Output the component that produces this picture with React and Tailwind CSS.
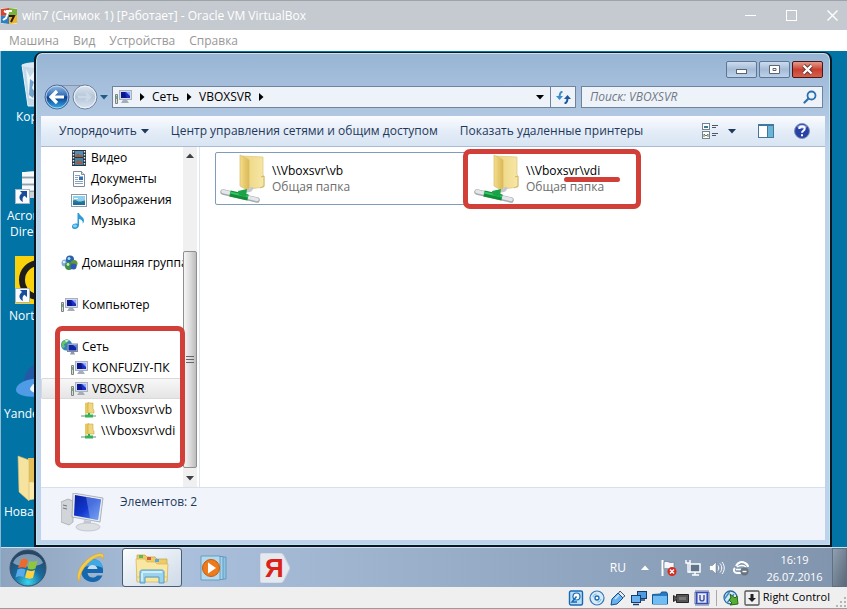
// src/App.jsx
const treeItems = [
  { label: "Видео", level: 1, icon: VideoIcon },
  { label: "Документы", level: 1, icon: DocumentIcon },
  { label: "Изображения", level: 1, icon: ImageIcon },
  { label: "Музыка", level: 1, icon: MusicIcon },
  { label: "Домашняя группа", level: 0, icon: HomeGroupIcon, spaced: true },
  { label: "Компьютер", level: 0, icon: ComputerIcon, spaced: true },
  { label: "Сеть", level: 0, icon: NetworkIcon, spaced: true },
  { label: "KONFUZIY-ПК", level: 1, icon: ComputerIcon },
  { label: "VBOXSVR", level: 1, icon: ComputerIcon, active: true },
  { label: "\\\\Vboxsvr\\vb", level: 2, icon: ShareIcon },
  { label: "\\\\Vboxsvr\\vdi", level: 2, icon: ShareIcon },
];

const indents = ["pl-5", "pl-[30px]", "pl-10"];

function VideoIcon() {
  return (
    <svg width="16" height="16" viewBox="0 0 16 16">
      <rect x="1" y="0" width="14" height="16" fill="#2b3440" />
      <rect x="4" y="1" width="8" height="6" fill="#4f8fb8" />
      <rect x="4" y="8" width="8" height="7" fill="#3f86ad" />
      <path d="M4 7l3-4 2 3 1-2 2 3zM5 14l2-5 2 4 2-3v4z" fill="#a65a3a" />
      <path d="M2.500 1v15M13.500 1v15" stroke="#e8edf2" strokeWidth="1.400" strokeDasharray="1.500 1.500" />
    </svg>
  );
}

function DocumentIcon() {
  return (
    <svg width="16" height="16" viewBox="0 0 16 16">
      <path d="M2.500.500h8l3 3v12h-11z" fill="#fff" stroke="#7d8c9b" />
      <path d="M10.500.500v3h3" fill="#dbe5ee" stroke="#7d8c9b" />
      <path d="M4 4.500h5M4 6.500h3M4 8.500h3M4 10.500h8M4 12.500h8" stroke="#8ba2bb" />
      <rect x="8" y="5.500" width="4" height="3.500" fill="#2f6fb5" />
    </svg>
  );
}

function ImageIcon() {
  return (
    <svg width="16" height="16" viewBox="0 0 16 16">
      <rect x=".5" y="2.500" width="15" height="12" fill="#fff" stroke="#8b98a5" />
      <rect x="2" y="4" width="12" height="9" fill="#8fd0ee" />
      <path d="M2 8.500c3-1.500 4 .5 6 1s4-1 6-1V13H2z" fill="#2c7f8c" />
      <path d="M2 11c4-1 8 0 12-.5V13H2z" fill="#1c6fa0" />
      <path d="M3 6.500h4" stroke="#fff" />
    </svg>
  );
}

function MusicIcon() {
  return (
    <svg width="16" height="16" viewBox="0 0 16 16">
      <path d="M6.500 0H8c.5 3 5.500 4 5 8-.2 1.300-1 2.300-1.500 2.500C12.500 8 10 6.500 8 6v6c0 2.500-2 4-4.300 4S1 14.700 1 13.300c0-2 2.700-3.500 5.500-2.600z" fill="#2c9bd8" />
      <ellipse cx="4" cy="13" rx="2" ry="1.400" fill="#8ad4f5" />
    </svg>
  );
}

function HomeGroupIcon() {
  return (
    <svg width="17" height="16" viewBox="0 0 17 16">
      <circle cx="4" cy="8" r="3.500" fill="#7fa9d8" />
      <circle cx="9" cy="4.500" r="4" fill="#2b61a8" />
      <circle cx="13" cy="8.500" r="3.500" fill="#5d9a3f" />
      <circle cx="8" cy="11" r="4" fill="#3f8d4b" />
      <circle cx="12.500" cy="11.500" r="3" fill="#3158b5" />
      <circle cx="8" cy="3.500" r="1.500" fill="#a6dff5" />
      <circle cx="7" cy="9.500" r="1.400" fill="#c9ecb2" />
      <circle cx="3" cy="7" r="1.300" fill="#d9ecfb" />
    </svg>
  );
}

function ComputerIcon() {
  return (
    <svg width="17" height="16" viewBox="0 0 17 16">
      <path d="M.5 5.500h2v9h-2z" fill="#d5dad5" stroke="#7c8580" />
      <path d="M1.500 7v3" stroke="#6cb66c" />
      <rect x="4.500" y="1.500" width="12" height="9" fill="#d3d9e6" stroke="#a9b0c4" />
      <rect x="6" y="3" width="9" height="6" fill="#1c2fc0" />
      <path d="M6 3h4l1.500 6H6z" fill="#0a1690" />
      <path d="M11 3h4v4z" fill="#8aa8ff" />
      <path d="M8 11h4l2 3H6z" fill="#a7adb8" />
    </svg>
  );
}

function NetworkIcon() {
  return (
    <svg width="17" height="16" viewBox="0 0 17 16">
      <circle cx="5.500" cy="6" r="5.500" fill="#2d87b8" />
      <path d="M1.500 3c2-2.500 4-2.500 6-2.500L6 4 3 5l1 3-2 1C0 7 .5 5 1.500 3z" fill="#6cc26b" />
      <path d="M4 1.500c2-.8 3-.5 4 .5L5 3z" fill="#d8f3e2" />
      <rect x="6.500" y="5" width="10" height="7.500" fill="#c4cdde" stroke="#7b88a0" />
      <rect x="7.500" y="6" width="8" height="5.500" fill="#0d25a8" />
      <path d="M12 6h3.500v3z" fill="#5b83ee" />
      <path d="M10 13h3l1 2.500H9z" fill="#8f99a9" />
    </svg>
  );
}

function ShareIcon() {
  return (
    <svg width="16" height="16" viewBox="0 0 16 16">
      <path d="M4 1l4-1v11l-4 1z" fill="#e8c860" />
      <path d="M7 1h5v6l1 1v3H7z" fill="#f0d67c" stroke="#c9a846" strokeWidth=".6" />
      <path d="M8 11v3" stroke="#35a852" strokeWidth="2" />
      <path d="M0 14h15" stroke="#b9c4c0" strokeWidth="2" />
      <path d="M4 14h8" stroke="#35b455" strokeWidth="3" />
    </svg>
  );
}

function SharedFolderIcon() {
  return (
    <svg width="48" height="50" viewBox="0 0 48 50" className="shrink-0">
      <defs>
        <linearGradient id="folderFront" x1="0" x2="1">
          <stop offset="0" stopColor="#f3dd8c" />
          <stop offset="1" stopColor="#dcb955" />
        </linearGradient>
        <linearGradient id="folderBack" x1="0" x2="1">
          <stop offset="0" stopColor="#ecd27c" />
          <stop offset="1" stopColor="#f7e7a6" />
        </linearGradient>
      </defs>
      <path d="M22 3l21 1v18l1 2v10L30 36z" fill="url(#folderBack)" stroke="#dcc57d" strokeWidth=".7" />
      <path d="M20 2l9 5v31l-9-5z" fill="url(#folderFront)" stroke="#d8bd68" strokeWidth=".7" />
      <path d="M41 24l3-1v10l-4 2" fill="#f5e6a8" stroke="#c9a94c" strokeWidth=".8" />
      <path d="M32 34c0 3-2 4-6 4" stroke="#c3c9cd" strokeWidth="3" fill="none" />
      <path d="M3 39l34 8" stroke="#a3a9ad" strokeWidth="5.500" strokeLinecap="round" />
      <path d="M3 38.500l34 8" stroke="#e3e7e9" strokeWidth="3.500" strokeLinecap="round" />
      <path d="M10 40.500l18 4" stroke="#108c3a" strokeWidth="6" />
      <path d="M10 39.500l18 4" stroke="#34c462" strokeWidth="2" />
      <path d="M18 38l9-2-1 8-7-2z" fill="#19a248" />
    </svg>
  );
}

function BigComputerIcon() {
  return (
    <svg width="44" height="40" viewBox="0 0 44 40">
      <defs>
        <linearGradient id="screen" x1="0" x2="1" y2="1">
          <stop offset="0" stopColor="#0b1f9c" />
          <stop offset=".5" stopColor="#1238cf" />
          <stop offset="1" stopColor="#5f92f0" />
        </linearGradient>
      </defs>
      <path d="M0 9l7-3 5 2v21l-4 3-8-3z" fill="#d2d5d8" stroke="#9da2a8" strokeWidth=".7" />
      <path d="M2 12l4 1M2 15l4 1" stroke="#70767d" />
      <path d="M12 0l30 5-3 24-28-5z" fill="#e7ebef" stroke="#9ba3ac" strokeWidth=".8" />
      <path d="M14 2l26 4.500-3 20.500-24-4.500z" fill="url(#screen)" />
      <path d="M25 4l15 2.500-3 20.500-8-1.500z" fill="#9dc2fb" opacity=".4" />
      <path d="M23 27l7 1v5h-8z" fill="#c5cacf" />
      <ellipse cx="27" cy="34" rx="12" ry="4" fill="#dde0e3" stroke="#b4b9be" strokeWidth=".7" />
    </svg>
  );
}

function VBoxIcon() {
  return (
    <svg width="16" height="16" viewBox="0 0 16 16">
      <rect width="16" height="16" rx="1" fill="#e9efe9" />
      <path d="M0 1l8-1v7L0 8z" fill="#d6432d" />
      <path d="M8 0l8 1v6L8 7z" fill="#7fb23a" />
      <path d="M0 8l8-1v9l-8-1z" fill="#2f7fc4" />
      <path d="M8 7h8v8l-8 1z" fill="#f0b52e" />
      <path d="M3 3l4 2-2 5-3 2M5 3h6" stroke="#fff" strokeWidth="2" fill="none" />
      <path d="M8 8h5l-3 6" stroke="#2a1b12" strokeWidth="2" fill="none" />
    </svg>
  );
}

function NavButtons() {
  return (
    <svg width="54" height="26" viewBox="0 0 54 26">
      <defs>
        <linearGradient id="backBlue" x2="0" y2="1">
          <stop offset="0" stopColor="#9cc0e4" />
          <stop offset=".45" stopColor="#2f6bb5" />
          <stop offset=".5" stopColor="#0c3b8a" />
          <stop offset="1" stopColor="#35b4ee" />
        </linearGradient>
        <linearGradient id="fwdGrey" x2="0" y2="1">
          <stop offset="0" stopColor="#dce6f1" />
          <stop offset=".5" stopColor="#b5c5d8" />
          <stop offset="1" stopColor="#dbe6f2" />
        </linearGradient>
      </defs>
      <path d="M13 1h28c-6 2-9 6-14 6s-8-4-14-6z" fill="#a9bdd6" />
      <path d="M13 1.500h28" stroke="#8496b0" />
      <circle cx="13" cy="13" r="12" fill="url(#backBlue)" stroke="#4c6690" />
      <circle cx="13" cy="13" r="11" fill="none" stroke="#c8def5" strokeWidth=".8" />
      <path d="M20 13H8M13 7l-6 6 6 6" stroke="#fff" strokeWidth="3.200" fill="none" />
      <circle cx="41" cy="13" r="12" fill="url(#fwdGrey)" stroke="#71829c" />
      <circle cx="41" cy="13" r="10.800" fill="none" stroke="#eef4fa" />
      <path d="M34 13h12M42 9l4 4-4 4" stroke="#cbd8e6" strokeWidth="2.500" fill="none" />
    </svg>
  );
}

function Triangle({ dir = "down" }) {
  return (
    <svg width="8" height="8" viewBox="0 0 8 8">
      {dir === "down" && <path d="M0 2h8L4 6.500z" fill="currentColor" />}
      {dir === "right" && <path d="M2 0l4.500 4L2 8z" fill="currentColor" />}
      {dir === "up" && <path d="M0 6h8L4 1.500z" fill="currentColor" />}
    </svg>
  );
}

function DesktopIcons() {
  return (
    <ul className="w-[60px] text-white text-[12px] leading-4">
      <li className="pt-[10px] h-[117px]">
        <svg width="34" height="48" viewBox="0 0 34 48" className="ml-5">
          <path d="M1 4h32l-5 41H7z" fill="#c3d8e8" stroke="#e9f3fa" />
          <path d="M5 8l4 8 5-7 5 9 6-8v25l-8 5-9-3z" fill="#edf4fa" />
          <path d="M9 18l4 3-2 6 3 4-2 6-4-3zM20 20l5 5-4 7-2-5z" fill="#73a3cb" />
          <ellipse cx="17" cy="4" rx="16" ry="3" fill="#dbe8f1" />
        </svg>
        <span className="block pl-[15px]">Корзина</span>
      </li>
      <li className="h-[84px]">
        <svg width="36" height="38" viewBox="0 0 36 38" className="ml-[14px] mb-[2px]">
          <path d="M7 6c0-4 26-4 26 0v24H7z" fill="#c9d1d9" />
          <path d="M7 6h26M7 13h26M7 20h26" stroke="#f5f7f9" strokeWidth="4" />
          <path d="M7 9.500h26M7 16.500h26M7 23.500h26" stroke="#8fa0ae" />
          <ShortcutArrow />
        </svg>
        <span className="block pl-[6px]">Acronis</span>
        <span className="block pl-[9px]">Director</span>
      </li>
      <li className="pt-1 h-[110px]">
        <svg width="48" height="48" viewBox="0 0 48 48" className="ml-[14px] mb-1">
          <rect width="48" height="48" fill="#fad20c" />
          <circle cx="24" cy="24" r="17" fill="none" stroke="#1e1e1b" strokeWidth="6" />
          <g transform="translate(0 11)"><ShortcutArrow /></g>
        </svg>
        <span className="block pl-2">Norton</span>
      </li>
      <li className="h-[92px]">
        <svg width="46" height="40" viewBox="0 0 46 40" className="ml-[14px] mb-1">
          <path d="M9 20C10 6 20-2 36 2l4 22H12z" fill="#2459a8" />
          <path d="M1 28c0-8 14-12 28-12s20 10 12 15-40 6-40-3z" fill="#4f9be6" />
          <path d="M15 27c1-5 8-8 18-8v12c-8 2-17 0-18-4z" fill="#f2f7fc" />
        </svg>
        <span className="block pl-[3px]">Yandex</span>
      </li>
      <li>
        <svg width="44" height="48" viewBox="0 0 44 48" className="ml-[15px] mb-[2px]">
          <path d="M12 4h30v38l-30 4z" fill="#e3be59" />
          <path d="M12 28l28 2v12l-28 4z" fill="#f8e9aa" />
          <path d="M2 2l11 4v41L3 38z" fill="#f6e3a0" stroke="#d9bb66" strokeWidth=".6" />
        </svg>
        <span className="block pl-[3px]">Новая</span>
      </li>
    </ul>
  );
}

function ShortcutArrow() {
  return (
    <g>
      <rect x=".5" y="21.500" width="14" height="14" fill="#f8fafc" stroke="#a9b5c2" />
      <path d="M5 23h7v7l-2.500-2.200C7.500 29 7 31 8 34c-4-2-5-6-1-9z" fill="#174d9b" />
    </g>
  );
}

function WindowButton({ label, danger, children }) {
  return (
    <button
      aria-label={label}
      className={
        danger
          ? "w-[31px] h-[17px] flex items-center justify-center rounded-[2px] border border-[#4a1717] bg-linear-to-b from-[#e29a8d] via-[#c9402f] to-[#d4604e]"
          : "w-[31px] h-[17px] flex items-center justify-center rounded-[2px] border border-[#5e7594] bg-linear-to-b from-[#ccdcee] via-[#a5bbd6] to-[#bdd2ea]"
      }
    >
      <svg width="13" height="11" viewBox="0 0 13 11">{children}</svg>
    </button>
  );
}

function AddressBar() {
  return (
    <div className="flex items-center h-[26px] pl-[3px] pr-[2px] mt-[6px]">
      <button aria-label="Назад и вперёд"><NavButtons /></button>
      <button aria-label="Последние страницы" className="pl-[2px] pr-1 text-[#1f5c8c]"><Triangle /></button>
      <div className="flex-1 flex items-center h-[22px] border border-[#71839c] bg-[#eef3fa] text-black">
        <div className="flex-1 flex items-center gap-[6px] pl-[2px] text-[12px]">
          <ComputerIcon />
          <Triangle dir="right" />
          <a href="#net">Сеть</a>
          <Triangle dir="right" />
          <a href="#vboxsvr">VBOXSVR</a>
          <Triangle dir="right" />
        </div>
        <button aria-label="Журнал" className="px-[6px]"><Triangle /></button>
        <button aria-label="Обновить" className="w-[25px] h-full border-l border-[#71839c] flex items-center justify-center">
          <svg width="15" height="13" viewBox="0 0 15 13">
            <path d="M6.500.5C4 1 3.500 3 3.500 7" stroke="#3b8fc9" strokeWidth="2" fill="none" />
            <path d="M0 5h7L3.500 9z" fill="#3b8fc9" />
            <path d="M8.500 12.500c2.500-.5 3-2.500 3-6" stroke="#1d579d" strokeWidth="2" fill="none" />
            <path d="M8 8h7l-3.500-4z" fill="#1d579d" />
          </svg>
        </button>
      </div>
      <label className="flex items-center w-[242px] h-[22px] ml-[5px] border border-[#71839c] bg-[#eef3fa] pl-2 pr-[5px]">
        <input
          aria-label="Поиск"
          placeholder="Поиск: VBOXSVR"
          className="flex-1 min-w-0 bg-transparent italic text-[12px] outline-none placeholder:text-[#6f7884]"
        />
        <svg width="14" height="14" viewBox="0 0 14 14">
          <path d="M1.500 12.500L6 8" stroke="#2d6fae" strokeWidth="2.200" strokeLinecap="round" />
          <circle cx="8.500" cy="5.500" r="4" fill="#e8f4fd" stroke="#2d6fae" strokeWidth="1.800" />
        </svg>
      </label>
    </div>
  );
}

function Toolbar() {
  return (
    <div className="flex items-center h-[31px] mt-[6px] pl-[18px] pr-[15px] text-[12px] text-[#1e395b] border-b border-[#a9bcd3] bg-linear-to-b from-[#fafcfe] via-[#e4edf8] to-[#d9e5f3]">
      <button className="flex items-center gap-1">
        Упорядочить <Triangle />
      </button>
      <button className="ml-[22px]">Центр управления сетями и общим доступом</button>
      <button className="ml-[22px]">Показать удаленные принтеры</button>
      <div className="ml-auto flex items-center">
        <button aria-label="Вид" className="flex items-center gap-[9px]">
          <svg width="17" height="16" viewBox="0 0 17 16">
            <rect x=".5" y=".5" width="7" height="6" fill="#fff" stroke="#788391" />
            <rect x="2" y="3" width="4" height="2" fill="#3e7a90" />
            <rect x=".5" y="8.500" width="7" height="7" fill="#fff" stroke="#788391" />
            <path d="M2 14v-3l2 2 2-2v3" stroke="#5f7850" fill="none" />
            <path d="M10 2.500h6M10 4.500h4M10 10.500h6M10 12.500h4" stroke="#4d5866" />
          </svg>
          <Triangle />
        </button>
        <button aria-label="Область просмотра" className="ml-[22px]">
          <svg width="16" height="14" viewBox="0 0 16 14">
            <rect x=".5" y=".5" width="15" height="13" fill="#fff" stroke="#45769e" />
            <path d="M0 1.500h16" stroke="#45769e" />
            <rect x="10" y="2" width="5" height="11" fill="#69b5d5" />
            <path d="M9.500 2v11" stroke="#45769e" />
          </svg>
        </button>
        <button aria-label="Справка" className="ml-5">
          <svg width="16" height="16" viewBox="0 0 16 16">
            <circle cx="8" cy="8" r="7.500" fill="#2942a5" stroke="#8290b5" />
            <path d="M3 4c2-3 8-3 10 0-3 2-7 2-10 0z" fill="#91a7e0" />
            <path d="M5.300 6c0-3.300 5.400-3.300 5.400-.2 0 2-2.700 2-2.700 4M8 11.300v2" stroke="#fff" strokeWidth="2" fill="none" />
          </svg>
        </button>
      </div>
    </div>
  );
}

function Sidebar() {
  return (
    <nav className="relative flex w-[159px] shrink-0 border-r border-[#dde6f0]">
      <ul className="flex-1 min-w-0 overflow-hidden text-[12px] text-black">
        {treeItems.map((item) => (
          <li key={item.label} className={item.spaced ? "mt-[21px]" : ""}>
            <a
              href="#folder"
              className={`flex items-center gap-1 h-[21px] whitespace-nowrap [&>svg]:shrink-0 ${indents[item.level]} ${
                item.active ? "rounded-[2px] bg-linear-to-b from-[#f8f8f8] to-[#e4e4e4] outline -outline-offset-1 outline-[#d9d9d9]" : ""
              }`}
            >
              <item.icon />
              {item.label}
            </a>
          </li>
        ))}
      </ul>
      <div className="w-[14px] mr-[2px] flex flex-col items-center bg-[#f0f0f0] text-[#3d4045]">
        <button aria-label="Вверх" className="h-[18px]"><Triangle dir="up" /></button>
        <div className="mt-[86px] flex-1 w-full flex flex-col items-center justify-center gap-[2px] rounded-[2px] border border-[#8f8f8f] bg-linear-to-r from-[#f5f5f5] via-[#dcdcdc] to-[#bcbcbc]">
          <i className="w-2 h-px bg-[#666]" />
          <i className="w-2 h-px bg-[#666]" />
          <i className="w-2 h-px bg-[#666]" />
        </div>
        <button aria-label="Вниз" className="h-[19px]"><Triangle /></button>
      </div>
      <div className="absolute left-[14px] top-[179px] w-[130px] h-[142px] border-[5px] border-[#d23f38] rounded-[7px]" />
    </nav>
  );
}

function FolderTile({ name, focused, marked }) {
  return (
    <button
      className={`relative flex w-[253px] h-[53px] pl-1 border rounded-[2px] text-left ${
        focused ? "border-[#7f9db9]" : "border-transparent"
      }`}
    >
      <SharedFolderIcon />
      <span className="pl-1 pt-[10px] text-[12px] leading-4">
        <span className="block text-black">{name}</span>
        <span className="block text-[#6d6d6d]">Общая папка</span>
      </span>
      {marked && (
        <>
          <span className="absolute -left-[7px] -top-[4px] w-[178px] h-[60px] border-[5px] border-[#d23f38] rounded-[7px]" />
          <span className="absolute left-[94px] top-[24px] w-[56px] h-[5px] bg-[#d23f38] rounded-full" />
        </>
      )}
    </button>
  );
}

function ExplorerWindow() {
  return (
    <section className="absolute left-[33px] right-[15px] top-px bottom-0 flex flex-col border-2 border-[#10161f] border-t rounded-t-lg px-[5px] pb-[5px] bg-linear-to-b from-[#98b5d5] via-[#bfd2e9] via-20% to-[#bdd3eb] shadow-[inset_0_0_0_1px_#b9e6f5]">
      <div className="flex justify-end gap-[2px] pt-2 pr-[2px]">
        <WindowButton label="Свернуть">
          <rect x="1.500" y="5.500" width="10" height="4" fill="#fff" stroke="#5b6470" />
        </WindowButton>
        <WindowButton label="Развернуть">
          <path d="M1.500 1.500h10v8h-10zM5 4.500h3v2H5z" fill="#fff" stroke="#5b6470" />
        </WindowButton>
        <WindowButton label="Закрыть" danger>
          <path d="M2.500 1.500l8 8M10.500 1.500l-8 8" stroke="#5d3633" strokeWidth="4" />
          <path d="M2.500 1.500l8 8M10.500 1.500l-8 8" stroke="#fff" strokeWidth="2.400" />
        </WindowButton>
      </div>
      <AddressBar />
      <Toolbar />
      <div className="flex-1 min-h-0 flex bg-white">
        <Sidebar />
        <div className="flex-1 flex items-start gap-px pl-[15px] pt-[5px]">
          <FolderTile name={"\\\\Vboxsvr\\vb"} focused />
          <FolderTile name={"\\\\Vboxsvr\\vdi"} marked />
        </div>
      </div>
      <footer className="flex h-[53px] pl-5 pt-[5px] gap-[15px] border-t border-[#d5e1ef] bg-[#f1f5fb] text-[12px] text-[#1e395b]">
        <BigComputerIcon />
        <span>Элементов: 2</span>
      </footer>
    </section>
  );
}

function Taskbar() {
  return (
    <div className="flex items-center h-10 border-t border-[#d0e0f0] bg-linear-to-r from-[#8ea3bd] via-[#aac0dc] via-20% to-[#8094ad] text-white">
      <button aria-label="Пуск" className="pl-2">
        <svg width="38" height="38" viewBox="0 0 38 38">
          <defs>
            <radialGradient id="orb" cx=".5" cy=".9" r=".8">
              <stop offset="0" stopColor="#38d5ef" />
              <stop offset=".5" stopColor="#176a9d" />
              <stop offset="1" stopColor="#294565" />
            </radialGradient>
          </defs>
          <circle cx="19" cy="19" r="18" fill="url(#orb)" stroke="#36536e" />
          <path d="M4 14C8 2 30 2 34 14c-8 5-22 5-30 0z" fill="#b9cde0" opacity=".6" />
          <path d="M12 11c3-2 5-1 7 0l-2 8c-3-1-5-1-8 0z" fill="#ef6a2a" />
          <path d="M20.500 12c3 1 5 1 8-.5l-2 8c-3 1.500-5 1-8 0z" fill="#8fc63d" />
          <path d="M8.500 20.500c3-1.500 5-1 8 0l-2 7.500c-3-1-5-1-8 .5z" fill="#58aae8" />
          <path d="M18 21c3 1 5 1.500 8 0l-2 8c-3 1-5 1-8-.5z" fill="#fdd142" />
        </svg>
      </button>
      <button aria-label="Internet Explorer" className="ml-7">
        <svg width="32" height="32" viewBox="0 0 32 32">
          <path d="M28 21H12.500c.5 5 7 6 9.500 2.500h5.500C25 29 21 30 17.500 30 11 30 6 25 6 18.500S11 7 17.500 7C24 7 29 12 28 21z" fill="#1668ae" />
          <path d="M7 16C8 10 12 7 17.500 7S27 10 28 16c-6-3-15-3-21 0z" fill="#3fa9e6" />
          <path d="M12.500 17c1-5.500 9-5.500 10 0z" fill="#c8dcf0" />
          <path d="M5 30C-2 24 7 7 22 2c5-1.500 8 0 6 5-1-3-3-3-6-2C12 9 3 22 5 30z" fill="#f4cb4d" stroke="#d6a42b" strokeWidth=".6" />
        </svg>
      </button>
      <button aria-label="Проводник" className="ml-[15px] w-[60px] h-[39px] flex items-center justify-center rounded-[3px] border border-[#4a5d74] bg-linear-to-br from-[#fafcfd] to-[#cedae8]">
        <svg width="34" height="32" viewBox="0 0 34 32">
          <path d="M2 3h8l2 2h8l2 2h10v22H2z" fill="#edcc68" stroke="#c5a146" strokeWidth=".7" />
          <path d="M4 3h4v3H4z" fill="#63b84f" />
          <path d="M12 5h4v3h-4z" fill="#d75b3b" />
          <path d="M20 7h4v3h-4z" fill="#5aa5dc" />
          <path d="M1 7h9l2 3h8l2 2h11l-1 18H2z" fill="#f9e6a0" stroke="#d2b35c" strokeWidth=".7" />
          <path d="M2 25h30" stroke="#e4c772" />
          <path d="M5 31V20c0-1 1-2 2-2h20c1 0 2 1 2 2v11h-5v-6H10v6z" fill="#9bd2ed" stroke="#4f9fca" />
          <path d="M7 20h20M7 21v8" stroke="#e1f5fc" strokeWidth="1.500" />
        </svg>
      </button>
      <button aria-label="Windows Media Player" className="ml-[18px]">
        <svg width="30" height="28" viewBox="0 0 30 28">
          <path d="M8 3h18v22H8z" fill="#8fc3e2" stroke="#5793b8" strokeWidth=".8" />
          <path d="M5 2.500h18v23H5z" fill="#a5d1ea" stroke="#5793b8" strokeWidth=".8" />
          <path d="M1 2h19v24H1z" fill="#b4daef" stroke="#5793b8" strokeWidth=".8" />
          <circle cx="11" cy="14" r="8.500" fill="#ee7b1b" stroke="#c65b0c" />
          <path d="M8 8.500l8 5.500-8 5.500z" fill="#fff" />
        </svg>
      </button>
      <button aria-label="Яндекс" className="relative ml-[30px] w-[30px] h-[30px]">
        <svg width="30" height="30" viewBox="0 0 30 30">
          <path d="M2 0h18c2 0 3 1 4 3l6 12-6 12c-1 2-2 3-4 3H2c-1 0-2-1-2-2V2C0 1 1 0 2 0z" fill="#e5e8ee" stroke="#cbd1dc" />
        </svg>
        <span className="absolute inset-y-0 left-[5px] font-bold text-[26px] leading-[30px] text-[#dc2218] font-['Liberation_Sans_Narrow','Liberation_Sans',sans-serif]">Я</span>
      </button>
      <div className="ml-auto flex items-center h-full">
        <span className="text-[12px] mr-[15px]">RU</span>
        <button aria-label="Скрытые значки"><Triangle dir="up" /></button>
        <div className="flex items-center gap-2 ml-3 mr-2">
          <svg width="16" height="16" viewBox="0 0 16 16">
            <path d="M1.500 0v16" stroke="#fff" strokeWidth="2" />
            <path d="M3 2c4-2 5 2 10 0v7c-5 2-6-2-10 0z" fill="#f5f7fa" stroke="#5b6c80" strokeWidth=".6" />
            <circle cx="11" cy="11.500" r="4.500" fill="#d62c20" />
            <path d="M9 9.500l4 4M13 9.500l-4 4" stroke="#fff" strokeWidth="1.500" />
          </svg>
          <svg width="16" height="16" viewBox="0 0 16 16">
            <rect x="5" y="4" width="10" height="8" fill="#60748b" stroke="#fff" strokeWidth="1.500" />
            <path d="M10 12v3M7 15h7" stroke="#fff" strokeWidth="1.500" />
            <path d="M1 0v3h4V0M3 3v9h2" stroke="#fff" strokeWidth="1.400" fill="none" />
          </svg>
          <svg width="16" height="16" viewBox="0 0 16 16">
            <path d="M.5 5.500h3L7 2v12l-3.500-3.500h-3z" fill="#fff" stroke="#61758d" strokeWidth=".5" />
            <path d="M9 5.500c1 1.500 1 3.500 0 5M11 3.500c2.300 2.500 2.300 6.500 0 9M13 2c3 3.500 3 8.500 0 12" stroke="#fff" fill="none" />
          </svg>
          <svg width="16" height="16" viewBox="0 0 16 16">
            <path d="M3 6C5 2 9 1 12 3c2 1 3 2 3 4" stroke="#fff" strokeWidth="2" fill="none" />
            <path d="M4 7c3-2 7-2 9 0" stroke="#fff" strokeWidth="1.500" fill="none" />
            <path d="M2 8c-2 2-1 5 2 5h4" fill="none" stroke="#fff" strokeWidth="2" />
            <path d="M3 9.500h5" stroke="#fff" strokeWidth="1.500" />
            <circle cx="11.500" cy="11.500" r="4" fill="#6b7580" />
            <path d="M9.500 11.500h4" stroke="#fff" strokeWidth="1.400" />
          </svg>
        </div>
        <time className="w-[75px] text-center text-[11px] leading-[17px]">
          16:19
          <br />
          26.07.2016
        </time>
        <button aria-label="Показать рабочий стол" className="w-[15px] h-full border border-[#5f7083] bg-linear-to-br from-[#90a0b1] to-[#59697a]" />
      </div>
    </div>
  );
}

function StatusBar() {
  return (
    <footer className="flex items-center justify-end h-[22px] gap-[5px] bg-[#efefef] border-b border-[#9c9c9c] text-[11px] text-black">
      <svg width="16" height="16" viewBox="0 0 16 16">
        <rect x="1.500" y="1" width="13" height="14" rx="1.500" fill="#b9ddf8" stroke="#176ab0" strokeWidth="1.400" />
        <circle cx="8.500" cy="6.500" r="3.500" fill="#fff" stroke="#176ab0" strokeWidth="1.200" />
        <path d="M8.500 6.500L4 12h5" stroke="#176ab0" strokeWidth="1.500" fill="none" />
      </svg>
      <svg width="16" height="16" viewBox="0 0 16 16">
        <circle cx="8" cy="8" r="7" fill="#d5eafa" stroke="#3676b5" strokeWidth="1.200" />
        <circle cx="8" cy="8" r="2" fill="#fff" stroke="#176ab0" strokeWidth="1.300" />
        <path d="M4 7c.5-2 1.500-3 3.500-3M12 9c-.5 2-1.500 3-3.500 3" stroke="#73b7ea" fill="none" />
      </svg>
      <svg width="16" height="16" viewBox="0 0 16 16">
        <path d="M10 1l5 5-3 2-4-4z" fill="#e9eff5" stroke="#3f5a78" />
        <path d="M8 3l5 5-6 6-6 1 1-6z" fill="#67b2ee" stroke="#174e91" />
        <path d="M5 9l4-4" stroke="#c9e6fb" strokeWidth="1.500" />
      </svg>
      <svg width="16" height="16" viewBox="0 0 16 16">
        <rect x="6.500" y="1.500" width="9" height="7" fill="#509be0" stroke="#163d70" />
        <path d="M9 10h5" stroke="#163d70" strokeWidth="1.500" />
        <rect x=".5" y="5.500" width="9" height="7" fill="#67b2ee" stroke="#163d70" />
        <path d="M2 14.500h6" stroke="#163d70" strokeWidth="1.500" />
      </svg>
      <svg width="16" height="16" viewBox="0 0 16 16">
        <path d="M.5 4.500l8-.5 1-2h5l1 2v10H.5z" fill="#287ac3" stroke="#195995" />
        <path d="M1 6h14v8H1z" fill="#70bdf3" />
      </svg>
      <svg width="16" height="16" viewBox="0 0 16 16">
        <path d="M.5 5.500l3 2v-3h12v8h-12v-3l-3 2z" fill="#555" stroke="#262626" />
        <path d="M6 7h7v3H6z" fill="#777" />
      </svg>
      <svg width="16" height="16" viewBox="0 0 16 16">
        <rect x="1.500" y="1.500" width="13" height="13" fill="none" stroke="#3a4da5" strokeWidth="2.500" strokeDasharray="1 1" />
        <rect x="2.500" y="2.500" width="11" height="11" fill="#7d92dc" stroke="#3a4da5" />
        <rect x="4" y="3.500" width="8" height="9" fill="#e9edfb" />
        <path d="M6 5v4c0 2.500 4 2.500 4 0V5" stroke="#3a4da5" strokeWidth="1.400" fill="none" />
      </svg>
      <i className="w-px h-4 mx-px bg-[#a9a9a9]" />
      <svg width="16" height="16" viewBox="0 0 16 16">
        <circle cx="7.500" cy="7.500" r="6.500" fill="#d4e9f7" stroke="#276a9e" strokeWidth="1.300" />
        <path d="M1.500 9l5-7M4 13l7-9" stroke="#3f8bc6" strokeWidth="1.500" fill="none" />
        <path d="M7 4l5 4 2-2 1 8-8 1 2-2-3-3 2-2z" fill="#5aad31" stroke="#28681b" />
      </svg>
      <div className="flex items-center gap-[3px]">
        <svg width="16" height="16" viewBox="0 0 16 16">
          <rect x="1" y="1" width="14" height="14" rx="1" fill="#f0f0f0" stroke="#555" strokeWidth="1.300" />
          <path d="M8 4v4" stroke="#222" strokeWidth="3" />
          <path d="M4 8h8L8 12z" fill="#222" />
        </svg>
        <span>Right Control</span>
      </div>
      <svg width="12" height="12" viewBox="0 0 12 12" className="self-end">
        <path d="M9 1h2v2H9zM9 5h2v2H9zM5 5h2v2H5zM1 9h2v2H1zM5 9h2v2H5zM9 9h2v2H9z" fill="#b5b5b5" />
      </svg>
    </footer>
  );
}

export default function App() {
  return (
    <div className="min-h-screen flex flex-col bg-[#efefef] font-['Open_Sans','Noto_Sans',sans-serif]">
      <header className="flex items-center h-[30px] pl-px pr-[9px] border-t border-[#9ea3aa] bg-[#c5cad0] text-white">
        <VBoxIcon />
        <h1 className="pl-[5px] text-[12px]">win7 (Снимок 1) [Работает] - Oracle VM VirtualBox</h1>
        <div className="ml-auto flex items-center gap-[30px]">
          <button aria-label="Свернуть">
            <svg width="11" height="11" viewBox="0 0 11 11"><path d="M0 5.500h11" stroke="#fff" /></svg>
          </button>
          <button aria-label="Развернуть">
            <svg width="11" height="11" viewBox="0 0 11 11"><rect x=".5" y=".5" width="10" height="10" fill="none" stroke="#fff" /></svg>
          </button>
          <button aria-label="Закрыть">
            <svg width="11" height="11" viewBox="0 0 11 11"><path d="M.5.500l10 10M10.500.500l-10 10" stroke="#fff" strokeWidth="1.400" /></svg>
          </button>
        </div>
      </header>
      <div className="flex items-center h-[21px] gap-[14px] pl-[9px] bg-white text-[12px] text-[#979797]">
        <button>Машина</button>
        <button>Вид</button>
        <button>Устройства</button>
        <button>Справка</button>
      </div>
      <main className="flex-1 flex flex-col border-l border-[#8fb7cf]">
        <div className="relative flex-1 overflow-hidden bg-[#0273a5]">
          <DesktopIcons />
          <ExplorerWindow />
        </div>
        <Taskbar />
      </main>
      <StatusBar />
    </div>
  );
}
